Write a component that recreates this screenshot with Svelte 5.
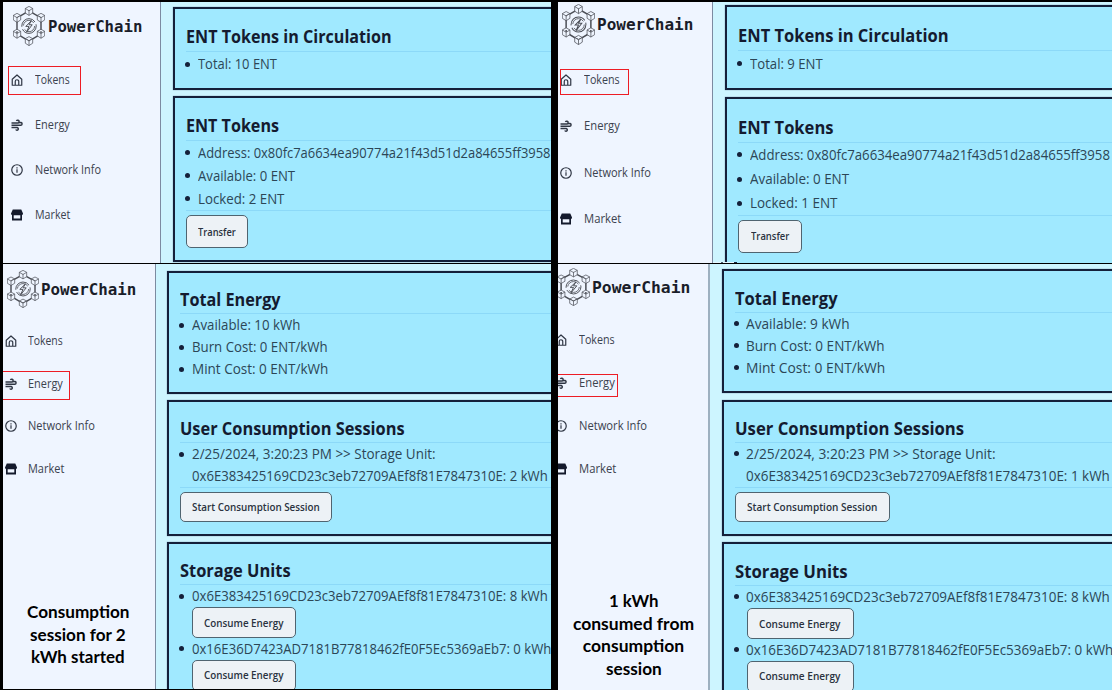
<script>
  const panels = [
    {
      id: 'a', pw: 548, ph: 261, side: 158, pad: 12, top: 5,
      logo: { x: 10, y: 4, w: 32, h: 40, gap: 3, tw: 94 },
      nav: { top: 56, pitch: 44.8, x: 8, gap: 11.5, widths: [35, 35, 66, 35] },
      mark: { x: 5, y: 64, w: 73, h: 29 },
      cards: [
        { h: 83, gap: 6, title: 'ENT Tokens in Circulation', tw: 206, th: 42, rows: [{ t: 'Total: 10 ENT', w: 78.5, h: 24 }] },
        { h: 166, gap: 0, title: 'ENT Tokens', tw: 93, th: 42, rows: [
          { t: 'Address: 0x80fc7a6634ea90774a21f43d51d2a84655ff3958', w: 352.5, h: 23 },
          { t: 'Available: 0 ENT', w: 97, h: 23 }, { t: 'Locked: 2 ENT', w: 86, h: 23 },
          { line: true }, { b: 'Transfer', w: 38, bw: 62, bh: 33, mt: 4 }] }
      ]
    },
    {
      id: 'b', pw: 554, ph: 261, side: 155, pad: 12, top: 3,
      logo: { x: 4, y: 2, w: 33, h: 41, gap: 2, tw: 96 },
      nav: { top: 55, pitch: 46.3, x: 2, gap: 11.5, widths: [36, 36, 67, 37] },
      mark: { x: 2, y: 67, w: 69, h: 26 },
      cards: [
        { h: 85, gap: 6.5, title: 'ENT Tokens in Circulation', tw: 211, th: 43, rows: [{ t: 'Total: 9 ENT', w: 72.5, h: 25 }] },
        { h: 175, gap: 0, title: 'ENT Tokens', tw: 95.5, th: 43, rows: [
          { t: 'Address: 0x80fc7a6634ea90774a21f43d51d2a84655ff3958', w: 360, h: 24.5 },
          { t: 'Available: 0 ENT', w: 99, h: 24 }, { t: 'Locked: 1 ENT', w: 87, h: 24 },
          { line: true }, { b: 'Transfer', w: 38.5, bw: 64, bh: 33, mt: 3.5 }] }
      ]
    },
    {
      id: 'c', pw: 548, ph: 425, side: 153, pad: 11, top: 7,
      logo: { x: 4, y: 6, w: 32, h: 38, gap: 2, tw: 95 },
      nav: { top: 55.5, pitch: 42.7, x: 1.5, gap: 11.5, widths: [35, 35, 67, 36] },
      mark: { x: -3, y: 107, w: 70, h: 29 },
      note: { x: 15, y: 337, w: 120, lines: [['Consumption', 103], ['session for 2', 96], ['kWh started', 94]] },
      cards: [
        { h: 122.5, gap: 6.5, title: 'Total Energy', tw: 101, th: 40, rows: [
          { t: 'Available: 10 kWh', w: 108, h: 22 }, { t: 'Burn Cost: 0 ENT/kWh', w: 136, h: 22 }, { t: 'Mint Cost: 0 ENT/kWh', w: 136, h: 22 }] },
        { h: 136, gap: 6, title: 'User Consumption Sessions', tw: 224.5, th: 40, rows: [
          { t: '2/25/2024, 3:20:23 PM >> Storage Unit:', w: 244, h: 22 },
          { t: '0x6E383425169CD23c3eb72709AEf8f81E7847310E: 2 kWh', w: 355.5, h: 22, plain: true },
          { line: true }, { b: 'Start Consumption Session', w: 127.5, bw: 152, bh: 30, mt: 4 }] },
        { h: 180, gap: 0, title: 'Storage Units', tw: 110.5, th: 40, rows: [
          { t: '0x6E383425169CD23c3eb72709AEf8f81E7847310E: 8 kWh', w: 355.5, h: 22 },
          { b: 'Consume Energy', w: 79.5, bw: 104, bh: 31, mt: 0, indent: true },
          { t: '0x16E36D7423AD7181B77818462fE0F5Ec5369aEb7: 0 kWh', w: 359, h: 21.5 },
          { b: 'Consume Energy', w: 79.5, bw: 104, bh: 31, mt: 0, indent: true }] }
      ]
    },
    {
      id: 'd', pw: 554, ph: 426, side: 152, pad: 11.5, top: 5,
      logo: { x: -1, y: 4, w: 33, h: 38, gap: 2, tw: 98 },
      nav: { top: 54, pitch: 43, x: -3.5, gap: 12.5, widths: [36, 36, 68, 37] },
      mark: { x: -3, y: 110, w: 63, h: 23 },
      note: { x: 6, y: 326, w: 139, lines: [['1 kWh', 49], ['consumed from', 121], ['consumption', 101], ['session', 56]] },
      cards: [
        { h: 124, gap: 6.5, title: 'Total Energy', tw: 103, th: 40.5, rows: [
          { t: 'Available: 9 kWh', w: 103.5, h: 22 }, { t: 'Burn Cost: 0 ENT/kWh', w: 139, h: 22 }, { t: 'Mint Cost: 0 ENT/kWh', w: 139, h: 22 }] },
        { h: 136.5, gap: 6, title: 'User Consumption Sessions', tw: 229, th: 40, rows: [
          { t: '2/25/2024, 3:20:23 PM >> Storage Unit:', w: 250, h: 22 },
          { t: '0x6E383425169CD23c3eb72709AEf8f81E7847310E: 1 kWh', w: 363.5, h: 22, plain: true },
          { line: true }, { b: 'Start Consumption Session', w: 130, bw: 155, bh: 30, mt: 4 }] },
        { h: 180, gap: 0, title: 'Storage Units', tw: 112.5, th: 40.5, rows: [
          { t: '0x6E383425169CD23c3eb72709AEf8f81E7847310E: 8 kWh', w: 363.5, h: 22.5 },
          { b: 'Consume Energy', w: 81.5, bw: 107, bh: 31, mt: 0, indent: true },
          { t: '0x16E36D7423AD7181B77818462fE0F5Ec5369aEb7: 0 kWh', w: 367, h: 21.5 },
          { b: 'Consume Energy', w: 81.5, bw: 107, bh: 31, mt: 0, indent: true }] }
      ]
    }
  ];
  const labels = ['Tokens', 'Energy', 'Network Info', 'Market'];
  const cubes = [[20, 6], [35, 14.5], [35, 34], [20, 43], [5, 34], [5, 14.5]];

  // Scales a label horizontally so that it fills the given width.
  function fit(node, width) {
    const natural = node.offsetWidth;
    node.style.transform = `scaleX(${width / natural})`;
    node.style.marginRight = `${width - natural}px`;
  }
</script>

{#snippet icon(i)}
  <svg class="icon" viewBox="0 0 24 24" fill="none" stroke="#2f3644" stroke-width="2.4">
    {#if i === 0}
      <path d="M2.500 10.500 12 2l9.500 8.500V22.500h-19zM8.500 22v-7a3.500 3.500 0 0 1 7 0V22" stroke-linejoin="round" />
    {:else if i === 1}
      <path d="M1 8h12.500a2.800 2.800 0 1 0-2.600-4M1 12.500h18.500a2.800 2.800 0 1 0-2.700-4M1 17h11a2.700 2.700 0 1 1-2.500 4" stroke-width="3" />
    {:else if i === 2}
      <circle cx="12" cy="12" r="10.500" /><path d="M12 10.500v7M12 6.500v2.400" />
    {:else}
      <path d="M3.500 1h17L24 9c0 2-1.500 3.500-3.500 3.500h-17C1.500 12.500 0 11 0 9z" fill="#141a2c" stroke="none" />
      <path d="M3.700 11v10.500h16.600V11M3.700 20.500h16.600" stroke="#141a2c" stroke-width="3.400" />
    {/if}
  </svg>
{/snippet}

<main>
  {#each panels as p (p.id)}
    <section class="panel {p.id}" style="width:{p.pw}px;height:{p.ph}px">
      <aside style="width:{p.side}px">
        <div class="brand" style="margin-left:{p.logo.x}px;padding-top:{p.logo.y}px;height:{p.nav.top}px;gap:{p.logo.gap}px">
          <svg class="logo" style="width:{p.logo.w}px;height:{p.logo.h}px" viewBox="0 0 40 49" preserveAspectRatio="none" fill="none" stroke="#4a4d55">
            <path d="M20 6 35 14.500V34L20 43 5 34V14.500z" stroke-width="1.800" />
            {#each cubes as [cx, cy]}
              <path transform="translate({cx} {cy})" fill="#eff5ff" stroke-width=".9" d="M0-5.500 4.600-3V2.600L0 5.500-4.600 2.600V-3zM-4.600-3 0-.2 4.600-3M0-.2V5.500" />
            {/each}
            <circle cx="20" cy="24.500" r="9" stroke-width="1.200" stroke-dasharray="24 3" />
            <circle cx="20" cy="24.500" r="7" stroke-width="1" stroke-dasharray="17 5" />
            <path d="M23 18 16 25h4l-3 7 7-9h-4z" stroke-width="1.200" fill="#eff5ff" />
          </svg>
          <span class="name" use:fit={p.logo.tw}>PowerChain</span>
        </div>
        <nav style="margin-left:{p.nav.x}px">
          {#each labels as label, i}
            <a href="#{label}" style="height:{p.nav.pitch}px;gap:{p.nav.gap}px">{@render icon(i)}<span use:fit={p.nav.widths[i]}>{label}</span></a>
          {/each}
        </nav>
      </aside>
      <div class="content" style="padding:{p.top}px 0 0 {p.pad}px">
        {#each p.cards as card}
          <article style="height:{card.h}px;margin-bottom:{card.gap}px">
            <h2 style="height:{card.th}px"><span use:fit={card.tw}>{card.title}</span></h2>
            {#each card.rows as row}
              {#if row.line}
                <hr />
              {:else if row.b}
                <button class:indent={row.indent} style="width:{row.bw}px;height:{row.bh}px;margin-top:{row.mt}px"><span use:fit={row.w}>{row.b}</span></button>
              {:else}
                <div class="row" class:plain={row.plain} style="height:{row.h}px"><span use:fit={row.w}>{row.t}</span></div>
              {/if}
            {/each}
          </article>
        {/each}
      </div>
      <div class="mark" style="left:{p.mark.x}px;top:{p.mark.y}px;width:{p.mark.w}px;height:{p.mark.h}px"></div>
      {#if p.note}
        <div class="note" style="left:{p.note.x}px;top:{p.note.y}px;width:{p.note.w}px">
          {#each p.note.lines as [text, w]}
            <div><span use:fit={w}>{text}</span></div>
          {/each}
        </div>
      {/if}
    </section>
  {/each}
</main>

<style>
  :global(body) { margin: 0; background: #000; overflow: hidden; }
  main { box-sizing: border-box; width: 1112px; height: 690px; padding: 2px 0 0 3px; background: #000; display: grid; grid-template-columns: 548px 554px; column-gap: 7px; grid-template-rows: 261px 426px; row-gap: 1px; overflow: hidden; font-family: "Open Sans", "Noto Sans", sans-serif; }
  .panel { position: relative; display: flex; overflow: hidden; background: #cdf5ff; }
  .panel.b::after { content: ""; position: absolute; left: 155px; bottom: 0; width: 24px; height: 1px; background: linear-gradient(90deg, #e6f8ff 0 8px, #4b5c70 8px 10px, #e6f8ff 10px 21px, #14203a 21px 24px); }
  aside { box-sizing: border-box; flex: none; border-right: 1px solid #7c8ba1; background: #eff5ff; overflow: hidden; }
  .d aside { border-right: 2px solid #9db0c0; }
  .brand { box-sizing: border-box; display: flex; align-items: flex-start; white-space: nowrap; }
  .logo { flex: none; display: block; }
  span { display: inline-block; flex: none; white-space: nowrap; transform-origin: 0 50%; }
  .name { font: bold 16px/42px "DejaVu Sans Mono", monospace; color: #1a1d29; }
  .c .name, .d .name { line-height: 40px; }
  nav { display: flex; flex-direction: column; }
  a { display: flex; align-items: center; color: #3b424e; font-size: 12.500px; line-height: 20px; text-decoration: none; }
  .icon { flex: none; width: 12px; height: 12px; display: block; }
  .content { flex: 1; min-width: 0; }
  article { box-sizing: border-box; width: 430px; border: 2px solid #14203a; background: #a0e9ff; padding-left: 11px; overflow: hidden; box-shadow: 0 0 1px #14203a88; }
  h2 { box-sizing: content-box; margin: 0; border-bottom: 1px solid #8cd9f8; display: flex; align-items: flex-end; font-size: 18px; line-height: 28px; font-weight: 700; color: #141b30; }
  .a h2, .b h2 { line-height: 30px; }
  hr { height: 1px; margin: 0; border: 0; background: #8cd9f8; }
  .row { display: flex; align-items: center; gap: 7.500px; margin-left: -1px; font-size: 14.500px; line-height: 20px; color: #2c4656; }
  .row::before { content: ""; flex: none; width: 5px; height: 5px; border-radius: 50%; background: #14203a; }
  .row.plain::before { background: transparent; }
  button { box-sizing: border-box; display: flex; align-items: center; justify-content: center; padding: 0; border: 1px solid #4f6470; border-radius: 5px; background: #edf2f6; color: #2a3240; font: 600 11.500px/18px "Open Sans", sans-serif; }
  button.indent { margin-left: 12px; }
  .mark { box-sizing: border-box; position: absolute; border: 1px solid #ed1c24; }
  .note { position: absolute; color: #000; font: bold 17.500px/22.600px Lato, sans-serif; }
  .note div { display: flex; justify-content: center; }
</style>
